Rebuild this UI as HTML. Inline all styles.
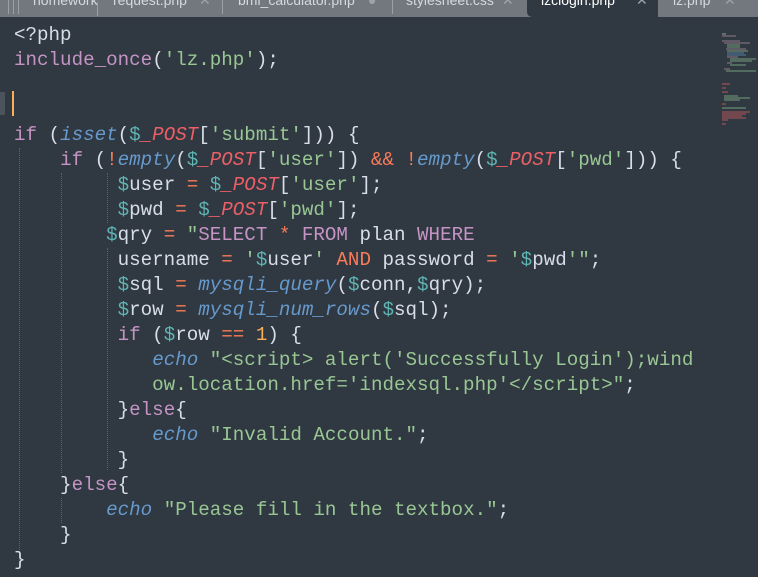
<!DOCTYPE html>
<html><head><meta charset="utf-8"><style>
html,body{margin:0;padding:0;width:758px;height:577px;overflow:hidden;background:#303841;}
#tabs{position:absolute;left:0;top:0;width:758px;height:17px;background:#72787e;}
.t{position:absolute;top:-8px;font:14px "Liberation Sans",sans-serif;color:#d6d9dc;white-space:nowrap;}
.x{color:#9ea3a8}
.act{position:absolute;top:0;height:17px;background:#303841;}
.sep{position:absolute;top:0;width:1px;height:14px;background:#9aa0a5;}
.code{position:absolute;left:0;top:0;font:19.2px "Liberation Mono",monospace;color:#d8dee9;white-space:pre;}
.l{position:absolute;left:14px;height:25px;line-height:25px;}
.k{color:#c594c5}.s{color:#99c794}.p{color:#ec5f66;font-style:italic}.o{color:#f97b58}.v{color:#5fb4b4}.f{color:#6699cc;font-style:italic}.n{color:#f9ae58}.w{color:#d8dee9}
.g{position:absolute;width:0;border-left:1px dotted #59616a;}
#mm{position:absolute;left:716px;top:18px;width:42px;height:120px;}
</style></head><body>
<div id="tabs">
<div class="sep" style="left:8px"></div><div class="sep" style="left:13px"></div><div class="sep" style="left:18px"></div>
<div class="t" style="left:33px">homework</div><div class="sep" style="left:97px;top:2px"></div>
<div class="t" style="left:113px">request.php</div><div class="t x" style="left:199px">✕</div>
<div class="sep" style="left:222px"></div>
<div class="t" style="left:238px">bmi_calculator.php</div><div class="t x" style="left:368px">●</div>
<div class="sep" style="left:392px"></div>
<div class="t" style="left:406px">stylesheet.css</div><div class="t x" style="left:502px">✕</div>
<div class="act" style="left:527px;width:131px;border-radius:0 0 0 5px"></div>
<div class="t" style="left:541px;color:#fff">lzclogin.php</div><div class="t x" style="left:636px">✕</div>
<div class="act" style="left:660px;width:100px;border-radius:0 0 0 5px;background:#72787e"></div>
<div class="t" style="left:673px">lz.php</div><div class="t x" style="left:724px">✕</div>
</div>
<div style="position:absolute;left:0;top:92px;width:5px;height:23px;background:#4b535c"></div>
<div style="position:absolute;left:12px;top:91px;width:2px;height:25px;background:#f9ae58"></div>
<div class="g" style="left:19px;top:148px;height:420px"></div>
<div class="g" style="left:61px;top:173px;height:300px"></div>
<div class="g" style="left:107px;top:173px;height:50px"></div>
<div class="g" style="left:107px;top:248px;height:222px"></div>
<div class="g" style="left:61px;top:498px;height:25px"></div>
<div class="code">
<div class="l" style="top:23px">&lt;?php</div>
<div class="l" style="top:48px"><span class="k">include_once</span>(<span class="s">'lz.php'</span>);</div>
<div class="l" style="top:123px"><span class="k">if</span> (<span class="f">isset</span>(<span class="v">$</span><span class="p">_POST</span>[<span class="s">'submit'</span>])) {</div>
<div class="l" style="top:148px">    <span class="k">if</span> (<span class="o">!</span><span class="f">empty</span>(<span class="v">$</span><span class="p">_POST</span>[<span class="s">'user'</span>]) <span class="o">&amp;&amp;</span> <span class="o">!</span><span class="f">empty</span>(<span class="v">$</span><span class="p">_POST</span>[<span class="s">'pwd'</span>])) {</div>
<div class="l" style="top:173px">         <span class="v">$</span>user <span class="o">=</span> <span class="v">$</span><span class="p">_POST</span>[<span class="s">'user'</span>];</div>
<div class="l" style="top:198px">         <span class="v">$</span>pwd <span class="o">=</span> <span class="v">$</span><span class="p">_POST</span>[<span class="s">'pwd'</span>];</div>
<div class="l" style="top:223px">        <span class="v">$</span>qry <span class="o">=</span> <span class="s">"</span><span class="k">SELECT</span> <span class="o">*</span> <span class="k">FROM</span> plan <span class="k">WHERE</span></div>
<div class="l" style="top:248px">         username <span class="o">=</span> <span class="s">'</span><span class="v">$</span>user<span class="s">'</span> <span class="o">AND</span> password <span class="o">=</span> <span class="s">'</span><span class="v">$</span>pwd<span class="s">'"</span>;</div>
<div class="l" style="top:273px">         <span class="v">$</span>sql <span class="o">=</span> <span class="f">mysqli_query</span>(<span class="v">$</span>conn,<span class="v">$</span>qry);</div>
<div class="l" style="top:298px">         <span class="v">$</span>row <span class="o">=</span> <span class="f">mysqli_num_rows</span>(<span class="v">$</span>sql);</div>
<div class="l" style="top:323px">         <span class="k">if</span> (<span class="v">$</span>row <span class="o">==</span> <span class="n">1</span>) {</div>
<div class="l s" style="top:348px">            <span class="f">echo</span> "&lt;script&gt; alert('Successfully Login');wind</div>
<div class="l s" style="top:373px">            ow.location.href='indexsql.php'&lt;/script&gt;"<span class="w">;</span></div>
<div class="l" style="top:398px">         }<span class="k">else</span>{</div>
<div class="l" style="top:423px">            <span class="f">echo</span> <span class="s">"Invalid Account."</span>;</div>
<div class="l" style="top:448px">         }</div>
<div class="l" style="top:473px">    }<span class="k">else</span>{</div>
<div class="l" style="top:498px">        <span class="f">echo</span> <span class="s">"Please fill in the textbox."</span>;</div>
<div class="l" style="top:523px">    }</div>
<div class="l" style="top:548px">}</div>
</div>
<svg id="mm" viewBox="0 0 42 120">
<g stroke-width="1" opacity="0.7">
<line x1="6" y1="16" x2="10" y2="16" stroke="#ccc"/><line x1="6" y1="18" x2="20" y2="18" stroke="#b9a"/>
<line x1="6" y1="23" x2="24" y2="23" stroke="#b9a"/><line x1="8" y1="25" x2="34" y2="25" stroke="#b9a"/>
<line x1="11" y1="27" x2="24" y2="27" stroke="#9c9"/><line x1="11" y1="29" x2="24" y2="29" stroke="#9c9"/>
<line x1="10" y1="31" x2="30" y2="31" stroke="#b9a"/><line x1="11" y1="33" x2="32" y2="33" stroke="#9c9"/>
<line x1="11" y1="35" x2="28" y2="35" stroke="#69c"/><line x1="11" y1="37" x2="30" y2="37" stroke="#69c"/>
<line x1="11" y1="39" x2="22" y2="39" stroke="#b9a"/><line x1="14" y1="41" x2="40" y2="41" stroke="#9c9"/>
<line x1="14" y1="43" x2="36" y2="43" stroke="#9c9"/><line x1="11" y1="45" x2="16" y2="45" stroke="#b9a"/>
<line x1="14" y1="47" x2="30" y2="47" stroke="#9c9"/><line x1="8" y1="51" x2="14" y2="51" stroke="#b9a"/>
<line x1="10" y1="53" x2="40" y2="53" stroke="#9c9"/>
<line x1="6" y1="66" x2="14" y2="66" stroke="#e66"/><line x1="6" y1="70" x2="10" y2="70" stroke="#e66"/>
<line x1="6" y1="74" x2="12" y2="74" stroke="#e66"/><line x1="8" y1="78" x2="22" y2="78" stroke="#9c9"/>
<line x1="8" y1="80" x2="34" y2="80" stroke="#9c9"/><line x1="8" y1="82" x2="24" y2="82" stroke="#9c9"/>
<line x1="6" y1="86" x2="10" y2="86" stroke="#e66"/><line x1="6" y1="90" x2="30" y2="90" stroke="#9c9"/>
<line x1="6" y1="94" x2="34" y2="94" stroke="#e66"/><line x1="6" y1="96" x2="30" y2="96" stroke="#e66"/>
<line x1="6" y1="98" x2="26" y2="98" stroke="#e66"/><line x1="6" y1="100" x2="30" y2="100" stroke="#e66"/>
<line x1="6" y1="102" x2="12" y2="102" stroke="#e66"/><line x1="6" y1="106" x2="10" y2="106" stroke="#e66"/>
</g></svg>
</body></html>
